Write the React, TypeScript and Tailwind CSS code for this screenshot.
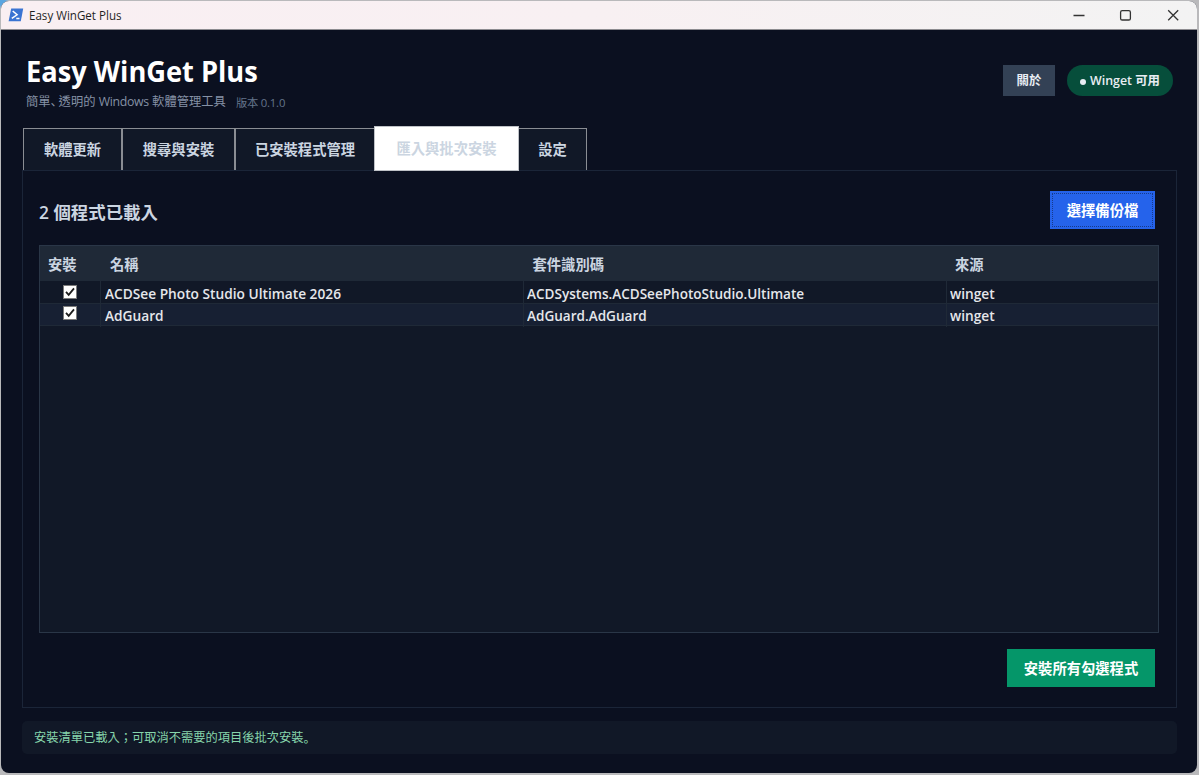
import type { ReactNode } from 'react'

const programs = [
  { name: 'ACDSee Photo Studio Ultimate 2026', id: 'ACDSystems.ACDSeePhotoStudio.Ultimate', source: 'winget' },
  { name: 'AdGuard', id: 'AdGuard.AdGuard', source: 'winget' },
]

function TitleBar() {
  return (
    <div className="flex h-[29px] shrink-0 items-center border-b border-[#8d8c90] bg-linear-to-r from-[#f9eff2] via-[#f8f0f2] to-[#f3f3f3] pl-[7px]">
      <svg width="16" height="14" viewBox="0 0 16 14">
        <path d="M3.2 .5h12L12.8 13.2H.6z" fill="#3a74d2" />
        <path d="M4.7 3l4.4 3.8-5.3 3.6M8.3 10.6h3.2" fill="none" stroke="#fff" strokeWidth="1.5" />
      </svg>
      <span className="ml-[5px] origin-left scale-x-[0.935] pt-[2px] text-[12.4px] text-[#1f1f1f]">Easy WinGet Plus</span>
      <div className="ml-auto flex">
        <svg width="120" height="28" viewBox="1070 1 120 28" fill="none" stroke="#333" strokeWidth="1.3">
          <path d="M1073.5 15.5h11" />
          <rect x="1120.6" y="10.6" width="9.8" height="9.4" rx="1.6" />
          <path d="M1168.2 10.2l10 10M1178.2 10.2l-10 10" />
        </svg>
        <span className="w-[7px]" />
      </div>
    </div>
  )
}

function Tab({ className, children }: { className: string; children: ReactNode }) {
  return (
    <div className={`flex h-[43px] items-center justify-center border-t-[1.5px] border-[#8a8d93] bg-[#111827] pb-px text-[14.3px] font-semibold text-[#cbd5e1] ${className}`}>
      {children}
    </div>
  )
}

function CheckBox() {
  return (
    <svg width="14" height="14" viewBox="0 0 14 14" className="mb-1">
      <rect x=".5" y=".5" width="13" height="13" fill="#fff" stroke="#7b7b7b" />
      <path d="M3 6.8l2.7 3L11 3.4" fill="none" stroke="#1c1c1c" strokeWidth="1.8" />
    </svg>
  )
}

function ProgramTable() {
  return (
    <div className="h-[388px] border border-[#2a3647] bg-[#111827]">
      <div className="grid h-[35px] grid-cols-[61px_423px_423px_1fr] items-center bg-[#1f2937] pt-[3px] text-[14.3px] font-semibold text-[#cbd5e1]">
        <span className="pl-2">安裝</span>
        <span className="pl-[9px]">名稱</span>
        <span className="pl-[8.5px]">套件識別碼</span>
        <span className="pl-2">來源</span>
      </div>
      {programs.map((p) => (
        <div
          key={p.id}
          className="grid h-[22.5px] grid-cols-[61px_423px_423px_1fr] border-b border-[#1f2937] text-[14px] leading-[25px] font-semibold text-[#e5e7eb] even:bg-[#111827] odd:bg-[#172033] last:leading-[23px]"
        >
          <span className="flex items-center justify-center border-r border-[#1f2937]"><CheckBox /></span>
          <span className="border-r border-[#1f2937] pl-[3.5px]"><span className="inline-block origin-left scale-x-[0.979]">{p.name}</span></span>
          <span className="border-r border-[#1f2937] pl-[3px]"><span className="inline-block origin-left scale-x-[0.968]">{p.id}</span></span>
          <span className="pl-[3px]"><span className="inline-block origin-left scale-x-[0.98]">{p.source}</span></span>
        </div>
      ))}
    </div>
  )
}

export default function App() {
  return (
    <div className="h-[775px] w-[1199px] overflow-hidden bg-[radial-gradient(circle_at_0_0,#5aa5e0_5px,#b9b9bb_9px)] px-px pt-px pb-[2px] pr-[2px] font-['Open_Sans','Noto_Sans_CJK_TC',sans-serif] whitespace-nowrap">
      <div className="flex h-full flex-col overflow-hidden rounded-lg bg-[#0b1020]">
        <TitleBar />
        <header className="flex h-[98px] shrink-0 justify-between pr-[24px] pl-[25px]">
          <div className="pt-[22px]">
            <h1 className="h-[39px] origin-left scale-x-[0.955] text-[28.5px] leading-[39px] font-bold text-white">Easy WinGet Plus</h1>
            <div className="flex h-[22px] items-center text-[12.3px] text-[#8591a5]">
              <span>
                簡單<span className="font-['Noto_Sans_CJK_SC'] tracking-[-4.3px]">、</span>透明的 <span className="tracking-[-0.3px]">Windows</span> 軟體管理工具
              </span>
              <span className="ml-[10px] pt-[2px] text-[11.3px] tracking-[-0.2px] text-[#64748b]">版本 0.1.0</span>
            </div>
          </div>
          <div className="flex gap-3 pt-[35px] text-[12.4px] font-semibold text-[#e8edf3]">
            <div className="flex h-[31px] w-[52px] items-center justify-center bg-[#334155] pt-[2px]">關於</div>
            <div className="flex h-[31px] w-[106px] items-center justify-center rounded-full bg-[#064e3b] pt-[2px]">
              <span className="mr-1 size-[6px] rounded-full bg-[#e8edf3]" />
              Winget 可用
            </div>
          </div>
        </header>
        <nav className="flex h-[43px] shrink-0 pl-[22px]">
          <Tab className="w-[99px] border-x-[1px]">軟體更新</Tab>
          <Tab className="w-[113px] border-x-[1px]">搜尋與安裝</Tab>
          <Tab className="w-[139px] border-l-[1px]">已安裝程式管理</Tab>
          <div className="z-10 -mt-[2px] flex h-[45px] w-[145px] items-center justify-center border border-[#bfc2c7] bg-white text-[14.3px] font-semibold text-[#cbd5e1]">
            匯入與批次安裝
          </div>
          <Tab className="w-[68px] border-r-[1px]">設定</Tab>
        </nav>
        <main className="mr-[20px] ml-[21px] -mt-px h-[538px] shrink-0 border border-[#1b2538] pt-[20px] pr-[17px] pl-4">
          <div className="flex h-[38px] items-center justify-between pr-1">
            <h2 className="pt-[4px] text-[17.4px] font-semibold text-[#cbd5e1]">2 個程式已載入</h2>
            <div className="h-[38px] w-[105px] bg-[#2563eb] p-[2px]">
              <div className="flex h-full items-center justify-center border border-dotted border-[#163a8c] pt-[2px] text-[14.3px] font-semibold text-white">選擇備份檔</div>
            </div>
          </div>
          <div className="h-4" />
          <ProgramTable />
          <div className="mt-4 mr-1 ml-auto flex h-[38px] w-[148px] items-center justify-center bg-[#059669] pt-[2px] text-[14.3px] font-semibold text-white">
            安裝所有勾選程式
          </div>
        </main>
        <footer className="mt-[13px] mr-[20px] ml-[21px] flex h-[33px] items-center rounded-[5px] bg-[#111827] pt-[2px] pl-3 text-[12.25px] text-[#86d5ab]">
          安裝清單已載入；可取消不需要的項目後批次安裝<span className="font-['Noto_Sans_CJK_SC']">。</span>
        </footer>
      </div>
    </div>
  )
}
